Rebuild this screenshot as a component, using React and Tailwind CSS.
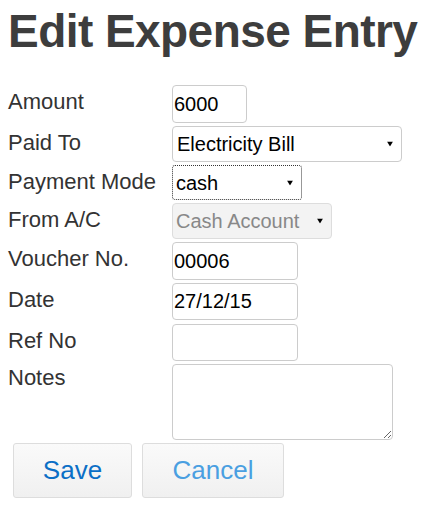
import React from "react";

const F = { fontFamily: '"Liberation Sans", Arial, sans-serif' };

function Arrow() {
  return (
    <svg className="pointer-events-none absolute right-[9px] top-1/2 -translate-y-1/2" width="6" height="5" viewBox="0 0 6 5">
      <path d="M0 0 L6 0 L3 5 Z" fill="#000" />
    </svg>
  );
}

function Row({ label, h, children, pt = "pt-[4px]" }) {
  return (
    <div className="flex items-start" style={{ height: h }}>
      <div className={`w-[164px] shrink-0 text-[22px] leading-[25px] text-[#333] ${pt}`}>{label}</div>
      {children}
    </div>
  );
}

export default function App() {
  return (
    <div className="bg-white w-[436px] h-[510px] pl-[8px] pt-[5px]" style={F}>
      <h1 className="text-[46px] font-bold leading-[53px] tracking-[-0.55px] text-[#3d3d3d]">Edit Expense Entry</h1>
      <div className="mt-[27px] flex flex-col gap-[3px]">
        <Row label="Amount" h={38}>
          <input defaultValue="6000" className="w-[75px] h-[38px] border border-[#ccc] rounded-[4px] pl-[1px] text-[20px] text-black outline-none" />
        </Row>
        <Row label="Paid To" h={36}>
          <div className="relative w-[230px] h-[36px]">
            <select defaultValue="e" className="appearance-none w-full h-full border border-[#ccc] rounded-[4px] pl-[4px] text-[20px] text-black bg-white outline-none">
              <option value="e">Electricity Bill</option>
            </select>
            <Arrow />
          </div>
        </Row>
        <Row label="Payment Mode" h={35}>
          <div className="relative w-[130px] h-[35px]">
            <select defaultValue="c" className="appearance-none w-full h-full border border-dotted border-[#333] rounded-[3px] pl-[3px] text-[20px] text-black bg-white outline-none">
              <option value="c">cash</option>
            </select>
            <Arrow />
          </div>
        </Row>
        <Row label="From A/C" h={36}>
          <div className="relative w-[160px] h-[36px]">
            <select disabled defaultValue="c" className="appearance-none w-full h-full border border-[#ddd] rounded-[4px] pl-[3px] text-[20px] text-[#888] bg-[#f3f3f3] outline-none opacity-100">
              <option value="c">Cash Account</option>
            </select>
            <Arrow />
          </div>
        </Row>
        <Row label="Voucher No." h={38}>
          <input defaultValue="00006" className="w-[126px] h-[38px] border border-[#ccc] rounded-[4px] pl-[1px] text-[20px] text-black outline-none" />
        </Row>
        <Row label="Date" h={38}>
          <input defaultValue="27/12/15" className="w-[126px] h-[37px] border border-[#ccc] rounded-[4px] pl-[1px] text-[20px] text-black outline-none" />
        </Row>
        <Row label="Ref No" h={37}>
          <input defaultValue="" className="w-[126px] h-[37px] border border-[#ccc] rounded-[4px] pl-[1px] text-[20px] text-black outline-none" />
        </Row>
        <Row label="Notes" h={76} pt="pt-[1px]">
          <textarea className="w-[221px] h-[76px] border border-[#ccc] rounded-[4px] text-[20px] outline-none block" />
        </Row>
        <div className="flex gap-[10px] pl-[5px]">
          <button className="w-[119px] h-[55px] border border-[#ddd] rounded-[3px] bg-gradient-to-b from-[#fafafa] to-[#f0f0f0] text-[26px] text-[#0b6fc6]">Save</button>
          <button className="w-[142px] h-[55px] border border-[#ddd] rounded-[3px] bg-gradient-to-b from-[#fafafa] to-[#f0f0f0] text-[26px] text-[#4a9fe1]">Cancel</button>
        </div>
      </div>
    </div>
  );
}
